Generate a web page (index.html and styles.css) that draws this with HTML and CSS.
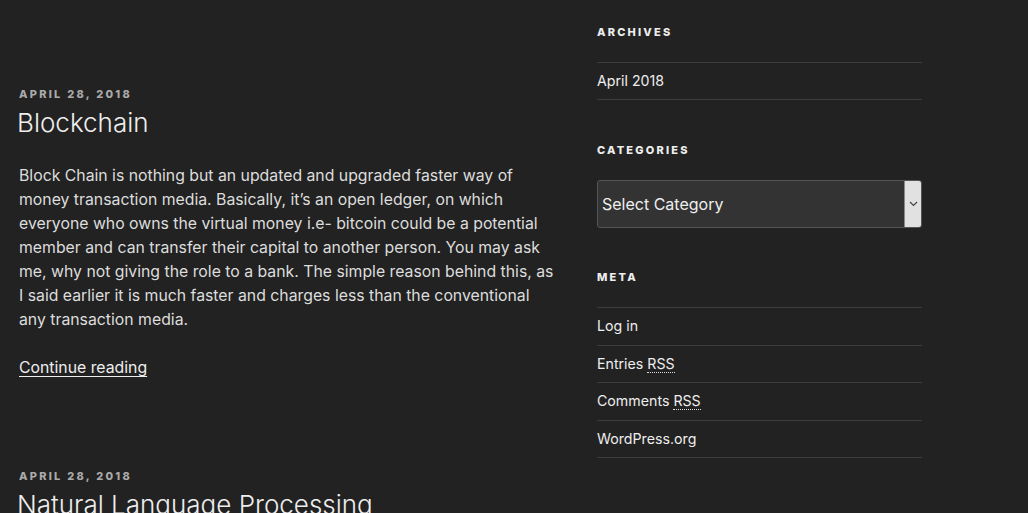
FILE: index.html
```html
<!DOCTYPE html>
<html lang="en">
<head>
<meta charset="utf-8">
<title>Blog</title>
<link rel="stylesheet" href="styles.css">
</head>
<body>
<div class="wrap">
  <main class="primary">
    <article class="post post-first">
      <div class="entry-meta">April 28, 2018</div>
      <h2 class="entry-title">Blockchain</h2>
      <p class="entry-text">Block Chain is nothing but an updated and upgraded faster way of<br>money transaction media. Basically, it’s an open ledger, on which<br>everyone who owns the virtual money i.e- bitcoin could be a potential<br>member and can transfer their capital to another person. You may ask<br>me, why not giving the role to a bank. The simple reason behind this, as<br>I said earlier it is much faster and charges less than the conventional<br>any transaction media.</p>
      <p class="entry-text"><a class="more-link" href="#">Continue reading</a></p>
    </article>
    <article class="post">
      <div class="entry-meta">April 28, 2018</div>
      <h2 class="entry-title">Natural Language Processing</h2>
    </article>
  </main>
  <aside class="secondary">
    <section class="widget widget-archives">
      <h2 class="widget-title">Archives</h2>
      <ul class="widget-list">
        <li><a href="#">April 2018</a></li>
      </ul>
    </section>
    <section class="widget widget-categories">
      <h2 class="widget-title">Categories</h2>
      <div class="select">
        <span class="select-label">Select Category</span>
        <span class="select-button">
          <svg width="9" height="6" viewBox="0 0 9 6"><path d="M1 1 L4.5 4.5 L8 1" fill="none" stroke="#444" stroke-width="1.2"/></svg>
        </span>
      </div>
    </section>
    <section class="widget widget-meta">
      <h2 class="widget-title">Meta</h2>
      <ul class="widget-list">
        <li><a href="#">Log in</a></li>
        <li><a href="#">Entries <abbr class="rss">RSS</abbr></a></li>
        <li><a href="#">Comments <abbr class="rss">RSS</abbr></a></li>
        <li><a href="#">WordPress.org</a></li>
      </ul>
    </section>
  </aside>
</div>
</body>
</html>
```

FILE: styles.css
```css
html, body {
  margin: 0;
  padding: 0;
  background: #222;
  color: #ddd;
  font-family: Inter, "Liberation Sans", sans-serif;
  height: 513px;
  overflow: hidden;
}

a {
  color: #eee;
  text-decoration: none;
}

.wrap {
  display: flex;
  justify-content: space-between;
  width: 903px;
  padding-left: 19px;
}

.primary {
  width: 560px;
  padding-top: 86px;
}

.post-first {
  padding-bottom: 88px;
}

.entry-meta {
  font-size: 11px;
  font-weight: 800;
  letter-spacing: 0.205em;
  text-transform: uppercase;
  line-height: 16px;
  color: #aaa;
}

.entry-title {
  margin: 0;
  margin-top: 2px;
  margin-left: -2px;
  font-size: 26px;
  font-weight: 300;
  line-height: 38px;
  color: #eee;
  white-space: nowrap;
}

.entry-text {
  margin: 0;
  font-size: 15.8px;
  line-height: 24px;
  color: #ddd;
  white-space: nowrap;
}

.entry-title + .entry-text {
  margin-top: 22px;
}

.entry-text + .entry-text {
  margin-top: 24px;
}

.more-link {
  text-decoration: underline;
  text-underline-offset: 3px;
  text-decoration-thickness: 1px;
}

.secondary {
  width: 325px;
  padding-top: 24px;
}

.widget-title {
  margin: 0;
  padding-bottom: 22px;
  font-size: 11px;
  font-weight: 800;
  letter-spacing: 0.2em;
  text-transform: uppercase;
  line-height: 16px;
  color: #eee;
}

.widget + .widget {
  margin-top: 42px;
}

.widget-meta {
  margin-top: 41px !important;
}

.widget-list {
  list-style: none;
  margin: 0;
  padding: 0;
  border-bottom: 1px solid #3d3d3d;
}

.widget-list li {
  border-top: 1px solid #3d3d3d;
  padding: 8px 0;
  line-height: 20px;
  font-size: 14.2px;
}

.widget-meta .widget-list li {
  line-height: 20.5px;
}

.rss {
  text-decoration: none;
  border-bottom: 1px dotted #ddd;
}

.select {
  display: flex;
  align-items: stretch;
  height: 48px;
  box-sizing: border-box;
  border: 1px solid #555;
  border-radius: 3px;
  background: #333;
  overflow: hidden;
}

.select-label {
  flex: 1;
  display: flex;
  align-items: center;
  padding-left: 4px;
  font-size: 16px;
  color: #eee;
}

.select-button {
  width: 16px;
  display: flex;
  align-items: center;
  justify-content: center;
  background: #e1e1e1;
  border-left: 1px solid #888;
}
```
